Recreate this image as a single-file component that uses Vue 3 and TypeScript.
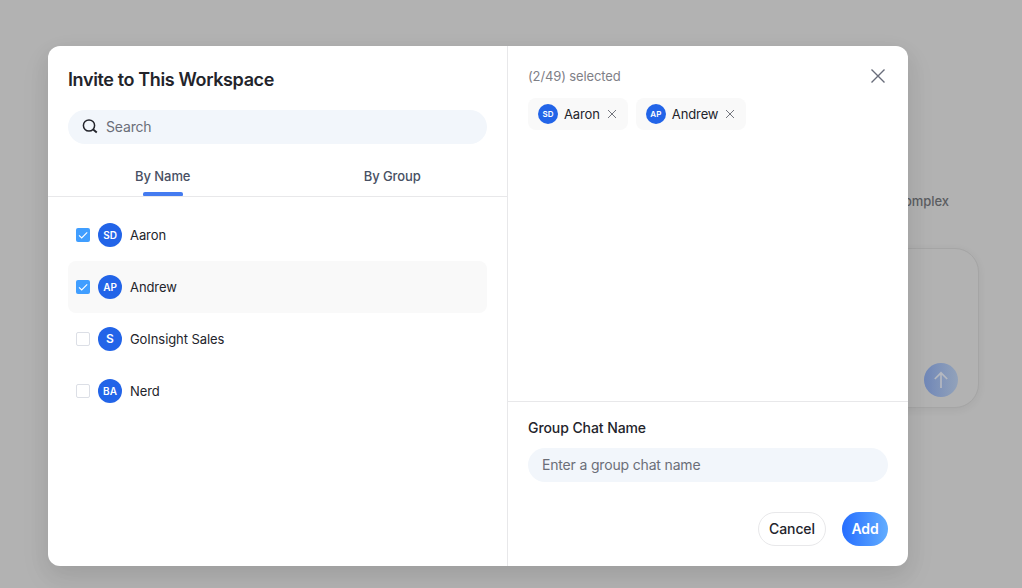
<script setup lang="ts">
import { ref, computed } from 'vue'

interface Member {
  name: string
  initials: string
  checked: boolean
  hovered?: boolean
}

const members = ref<Member[]>([
  { name: 'Aaron', initials: 'SD', checked: true },
  { name: 'Andrew', initials: 'AP', checked: true, hovered: true },
  { name: 'GoInsight Sales', initials: 'S', checked: false },
  { name: 'Nerd', initials: 'BA', checked: false },
])
const selected = computed(() => members.value.filter((m) => m.checked))
const tabs = ['By Name', 'By Group']
const activeTab = ref('By Name')
const search = ref('')
const chatName = ref('')
</script>

<template>
  <div class="page">
    <span class="backdrop-text">complex</span>
    <div class="backdrop-card">
      <div class="send">
        <svg width="18" height="18" viewBox="0 0 18 18" fill="none" stroke="#b4b8c0" stroke-width="1.7">
          <path d="M9 17V1.8M2.8 8L9 1.8L15.2 8" />
        </svg>
      </div>
    </div>

    <div class="dialog">
      <section class="left">
        <h1 class="title">Invite to This Workspace</h1>
        <label class="field search">
          <svg width="16" height="16" viewBox="0 0 16 16" fill="none" stroke="#23242b" stroke-width="1.5">
            <circle cx="7" cy="6.5" r="5.6" />
            <path d="M10.9 10.3L14.8 13.4" stroke-width="1.9" />
          </svg>
          <input v-model="search" placeholder="Search" />
        </label>
        <nav class="tabs">
          <button
            v-for="tab in tabs"
            :key="tab"
            class="tab"
            :class="{ active: tab === activeTab }"
            @click="activeTab = tab"
          >
            {{ tab }}
          </button>
        </nav>
        <ul class="list">
          <li
            v-for="m in members"
            :key="m.name"
            class="row"
            :class="{ hovered: m.hovered }"
            @click="m.checked = !m.checked"
          >
            <span class="check" :class="{ on: m.checked }">
              <svg v-if="m.checked" width="14" height="14" viewBox="0 0 14 14" fill="none" stroke="#fff" stroke-width="1.1">
                <path d="M3 7.3L5.7 9.9L11.2 4.3" />
              </svg>
            </span>
            <span class="avatar" :class="{ single: m.initials.length === 1 }">{{ m.initials }}</span>
            <span class="name">{{ m.name }}</span>
          </li>
        </ul>
      </section>

      <section class="right">
        <div class="picked">
          <header class="picked-head">
            <span class="count">({{ selected.length }}/49) selected</span>
            <svg class="close" width="14" height="14" viewBox="0 0 14 14" fill="none" stroke="#686c7a" stroke-width="1.4">
              <path d="M.5 .5L13.5 13.5M13.5 .5L.5 13.5" />
            </svg>
          </header>
          <div class="chips">
            <div v-for="m in selected" :key="m.name" class="chip">
              <span class="avatar small">{{ m.initials }}</span>
              <span class="name">{{ m.name }}</span>
              <svg width="10" height="10" viewBox="0 0 10 10" fill="none" stroke="#74767e" stroke-width="1" @click="m.checked = false">
                <path d="M1 1L9 9M9 1L1 9" />
              </svg>
            </div>
          </div>
        </div>
        <footer class="foot">
          <h2 class="label">Group Chat Name</h2>
          <label class="field">
            <input v-model="chatName" placeholder="Enter a group chat name" />
          </label>
          <div class="actions">
            <button class="btn cancel">Cancel</button>
            <button class="btn add">Add</button>
          </div>
        </footer>
      </section>
    </div>
  </div>
</template>

<style>
body {
  margin: 0;
  overflow: hidden;
}
</style>

<style scoped>
.page {
  position: relative;
  box-sizing: border-box;
  width: 1022px;
  height: 588px;
  padding: 46px 0 0 48px;
  overflow: hidden;
  background: #b2b2b2;
  font-family: Inter, 'Liberation Sans', sans-serif;
  color: #23242b;
}
.page *,
.page *::before,
.page *::after {
  box-sizing: border-box;
}
.backdrop-text {
  position: absolute;
  right: 73px;
  top: 192px;
  font-size: 13px;
  line-height: 18px;
  font-weight: 500;
  letter-spacing: -0.05px;
  color: #5b5d61;
}
.backdrop-card {
  position: absolute;
  left: 600px;
  top: 248px;
  width: 379px;
  height: 160px;
  border: 1px solid #a5a5a5;
  border-radius: 24px;
  background: #b2b2b2;
  box-shadow: 0 2px 8px rgba(0, 0, 0, 0.06);
}
.send {
  position: absolute;
  right: 20px;
  bottom: 10px;
  width: 34px;
  height: 34px;
  display: grid;
  place-items: center;
  border-radius: 50%;
  background: linear-gradient(90deg, #7087b8, #92a2ba);
}
.dialog {
  position: relative;
  width: 860px;
  height: 520px;
  display: flex;
  border-radius: 12px;
  background: #fff;
  box-shadow: 0 12px 32px 4px rgba(0, 0, 0, 0.04), 0 8px 20px rgba(0, 0, 0, 0.08);
}
.left {
  width: 460px;
  border-right: 1px solid #e8e8ea;
}
.title {
  margin: 20px 20px 0;
  font-size: 18px;
  line-height: 28px;
  font-weight: 600;
  letter-spacing: -0.37px;
}
.field {
  display: flex;
  align-items: center;
  height: 34px;
  padding: 0 14px;
  border-radius: 17px;
  background: #f2f6fb;
}
.search {
  margin: 16px 20px 0;
  gap: 8px;
}
.field input {
  flex: 1;
  min-width: 0;
  padding: 0;
  border: 0;
  outline: 0;
  background: none;
  font: 400 14px/20px Inter, 'Liberation Sans', sans-serif;
  letter-spacing: -0.17px;
  color: #23242b;
}
.field input::placeholder {
  color: #6b6e78;
  opacity: 1;
}
.tabs {
  display: flex;
  height: 53px;
  border-bottom: 1px solid #e8e8ea;
}
.tab {
  position: relative;
  flex: 1;
  padding: 12px 0 0;
  border: 0;
  background: none;
  font: 500 13px/20px Inter, 'Liberation Sans', sans-serif;
  letter-spacing: -0.07px;
  color: #485063;
}
.tab.active::after {
  content: '';
  position: absolute;
  left: calc(50% - 20px);
  bottom: 0;
  width: 40px;
  height: 4px;
  border-radius: 2px 2px 1px 1px;
  background: #447bf0;
}
.list {
  margin: 12px 20px 0;
  padding: 0;
  list-style: none;
}
.row {
  display: flex;
  align-items: center;
  height: 52px;
  padding: 0 8px;
  gap: 8px;
  border-radius: 8px;
}
.row.hovered {
  background: #f9f9f9;
}
.check {
  width: 14px;
  height: 14px;
  border: 1px solid #dcdfe6;
  border-radius: 2px;
  background: #fff;
}
.check.on {
  border: 0;
  background: #409eff;
}
.check svg {
  display: block;
}
.avatar {
  display: grid;
  place-items: center;
  width: 24px;
  height: 24px;
  border-radius: 50%;
  background: #2264e8;
  color: #fff;
  font-size: 10px;
  line-height: 12px;
  font-weight: 600;
}
.avatar.single {
  font-size: 12px;
}
.avatar.small {
  width: 20px;
  height: 20px;
  font-size: 8px;
}
.name {
  font-size: 13px;
  line-height: 20px;
  letter-spacing: -0.08px;
}
.right {
  flex: 1;
  display: flex;
  flex-direction: column;
}
.picked {
  flex: 1;
  padding: 20px;
}
.picked-head {
  display: flex;
  align-items: center;
  justify-content: space-between;
  height: 20px;
  padding-right: 3px;
}
.count {
  font-size: 13px;
  line-height: 20px;
  letter-spacing: -0.12px;
  color: #7f8087;
}
.chips {
  display: flex;
  gap: 8px;
  margin-top: 12px;
}
.chip {
  display: flex;
  align-items: center;
  height: 32px;
  padding: 0 11px 0 10px;
  border-radius: 8px;
  background: #f9f9f9;
}
.chip .name {
  margin: 0 7px 0 6px;
  letter-spacing: -0.12px;
}
.foot {
  height: 165px;
  padding: 16px 20px 0;
  border-top: 1px solid #e8e8ea;
}
.label {
  margin: 0 0 10px;
  font-size: 14px;
  line-height: 20px;
  font-weight: 500;
  letter-spacing: -0.08px;
}
.actions {
  display: flex;
  justify-content: flex-end;
  gap: 16px;
  margin-top: 30px;
}
.btn {
  height: 34px;
  padding: 0;
  border: 0;
  border-radius: 17px;
  font: 500 14px/20px Inter, 'Liberation Sans', sans-serif;
  letter-spacing: -0.12px;
}
.cancel {
  width: 68px;
  border: 1px solid #e8e8ea;
  background: #fff;
  color: #23242b;
}
.add {
  width: 46px;
  background: linear-gradient(90deg, #266eff, #62adff);
  color: #fff;
  font-weight: 600;
}
</style>
